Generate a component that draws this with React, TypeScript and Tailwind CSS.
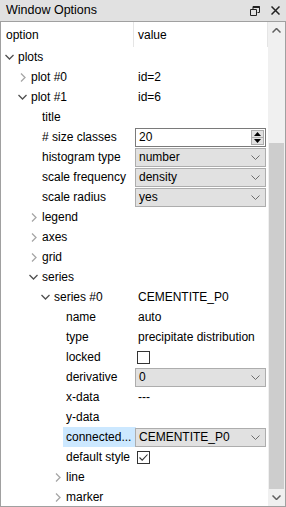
import type { ReactNode } from "react";

type Row = {
  level: number;
  label: string;
  arrow?: "open" | "closed";
  value?: ReactNode;
  selected?: boolean;
};

function ChevronRight() {
  return (
    <svg width="6" height="9" viewBox="0 0 6 9" className="block">
      <path d="M1 0.5 L5 4.5 L1 8.5" fill="none" stroke="#a6a6a6" strokeWidth="1.3" />
    </svg>
  );
}

function ChevronDown() {
  return (
    <svg width="9" height="6" viewBox="0 0 9 6" className="block">
      <path d="M0.5 1 L4.5 5 L8.5 1" fill="none" stroke="#505050" strokeWidth="1.3" />
    </svg>
  );
}

function SmallChevron() {
  return (
    <svg width="9" height="5" viewBox="0 0 9 5" className="block">
      <path d="M0.5 0.5 L4.5 4.5 L8.5 0.5" fill="none" stroke="#6d6d6d" strokeWidth="1" />
    </svg>
  );
}

function Combo({ text }: { text: string }) {
  return (
    <div className="flex h-[19px] w-[131px] items-center justify-between border border-[#adadad] bg-[#e1e1e1] pl-[3px] pr-[5px]">
      <span>{text}</span>
      <SmallChevron />
    </div>
  );
}

function SpinBox({ text }: { text: string }) {
  return (
    <div className="flex h-[19px] w-[131px] items-center justify-between border border-[#7a7a7a] bg-white pl-[3px] pr-[1px]">
      <span>{text}</span>
      <div className="flex h-[15px] w-[13px] flex-col border border-[#adadad] bg-[#e1e1e1]">
        <div className="flex flex-1 items-center justify-center border-b border-[#adadad]">
          <svg width="7" height="4" viewBox="0 0 7 4">
            <path d="M0 4 L3.5 0 L7 4 Z" fill="#000" />
          </svg>
        </div>
        <div className="flex flex-1 items-center justify-center">
          <svg width="7" height="4" viewBox="0 0 7 4">
            <path d="M0 0 L3.5 4 L7 0 Z" fill="#000" />
          </svg>
        </div>
      </div>
    </div>
  );
}

function CheckBox({ checked }: { checked?: boolean }) {
  return (
    <div className="ml-[2px] flex h-[13px] w-[13px] items-center justify-center border border-[#333] bg-white">
      {checked && (
        <svg width="11" height="11" viewBox="0 0 11 11">
          <path d="M1.5 5.5 L4.2 8.2 L9.5 2.5" fill="none" stroke="#333" strokeWidth="1.1" />
        </svg>
      )}
    </div>
  );
}

const rows: Row[] = [
  { level: 0, label: "plots", arrow: "open" },
  { level: 1, label: "plot #0", arrow: "closed", value: "id=2" },
  { level: 1, label: "plot #1", arrow: "open", value: "id=6" },
  { level: 2, label: "title" },
  { level: 2, label: "# size classes", value: <SpinBox text="20" /> },
  { level: 2, label: "histogram type", value: <Combo text="number" /> },
  { level: 2, label: "scale frequency", value: <Combo text="density" /> },
  { level: 2, label: "scale radius", value: <Combo text="yes" /> },
  { level: 2, label: "legend", arrow: "closed" },
  { level: 2, label: "axes", arrow: "closed" },
  { level: 2, label: "grid", arrow: "closed" },
  { level: 2, label: "series", arrow: "open" },
  { level: 3, label: "series #0", arrow: "open", value: "CEMENTITE_P0" },
  { level: 4, label: "name", value: "auto" },
  { level: 4, label: "type", value: "precipitate distribution" },
  { level: 4, label: "locked", value: <CheckBox /> },
  { level: 4, label: "derivative", value: <Combo text="0" /> },
  { level: 4, label: "x-data", value: "---" },
  { level: 4, label: "y-data" },
  { level: 4, label: "connected...", value: <Combo text="CEMENTITE_P0" />, selected: true },
  { level: 4, label: "default style", value: <CheckBox checked /> },
  { level: 4, label: "line", arrow: "closed" },
  { level: 4, label: "marker", arrow: "closed" },
];

const indents = ["pl-[3px]", "pl-[16px]", "pl-[27px]", "pl-[39px]", "pl-[51px]"];

export default function App() {
  return (
    <div
      className="flex h-[507px] w-[286px] flex-col overflow-hidden bg-[#e1e1e1] text-[12px] text-black"
      style={{ fontFamily: '"Liberation Sans", Arial, sans-serif' }}
    >
      {/* Title bar */}
      <div className="flex h-[21px] shrink-0 items-center justify-between pl-[6px] pr-[6px] text-[12.5px]">
        <span>Window Options</span>
        <div className="flex items-center gap-[11px]">
          <svg width="10" height="10" viewBox="0 0 10 10">
            <path d="M3 0.5 H9.5 V6.5 H7.5 M0.5 3.5 H6.5 V9.5 H0.5 Z M3 0.5 V3.5" fill="none" stroke="#222" strokeWidth="1" />
            <path d="M3 1 H9.5" stroke="#222" strokeWidth="2" />
          </svg>
          <svg width="9" height="9" viewBox="0 0 9 9">
            <path d="M0.5 0.5 L8.5 8.5 M8.5 0.5 L0.5 8.5" stroke="#222" strokeWidth="1.5" />
          </svg>
        </div>
      </div>

      {/* Content */}
      <div className="flex flex-1 overflow-hidden border border-[#a0a0a0] bg-white">
        <div className="flex flex-1 flex-col overflow-hidden">
          {/* Header */}
          <div className="flex h-[25px] shrink-0 items-center">
            <div className="flex h-full w-[133px] items-center border-r border-[#e5e5e5] pl-[5px]">option</div>
            <div className="flex h-full flex-1 items-center border-r border-[#e5e5e5] pl-[4px]">value</div>
          </div>

          {/* Tree rows */}
          {rows.map((r, i) => (
            <div key={i} className="flex h-[20px] shrink-0 items-center">
              <div className={`flex h-full w-[134px] items-center ${indents[r.level]}`}>
                <div className="flex w-[11px] shrink-0 items-center justify-center">
                  {r.arrow === "open" && <ChevronDown />}
                  {r.arrow === "closed" && <ChevronRight />}
                </div>
                <div className={`flex h-full flex-1 items-center pl-[3px] ${r.selected ? "bg-[#cce8ff]" : ""}`}>
                  <span className="whitespace-nowrap">{r.label}</span>
                </div>
              </div>
              <div className={`flex h-full flex-1 items-center ${r.selected ? "bg-[linear-gradient(to_right,#cce8ff_1px,transparent_1px)]" : ""}`}>
                {typeof r.value === "string" ? <span className="pl-[3px] whitespace-nowrap">{r.value}</span> : r.value}
              </div>
            </div>
          ))}
        </div>

        {/* Scrollbar */}
        <div className="flex w-[17px] shrink-0 flex-col bg-[#f0f0f0]">
          <div className="flex h-[17px] items-center justify-center">
            <svg width="9" height="5" viewBox="0 0 9 5">
              <path d="M0.5 4.5 L4.5 0.5 L8.5 4.5" fill="none" stroke="#606060" strokeWidth="1.5" />
            </svg>
          </div>
          <div className="flex flex-1 flex-col">
            <div className="h-[104px]" />
            <div className="mx-[1px] flex-1 bg-[#cdcdcd]" />
          </div>
          <div className="flex h-[17px] items-center justify-center">
            <svg width="9" height="5" viewBox="0 0 9 5">
              <path d="M0.5 0.5 L4.5 4.5 L8.5 0.5" fill="none" stroke="#606060" strokeWidth="1.5" />
            </svg>
          </div>
        </div>
      </div>
    </div>
  );
}
